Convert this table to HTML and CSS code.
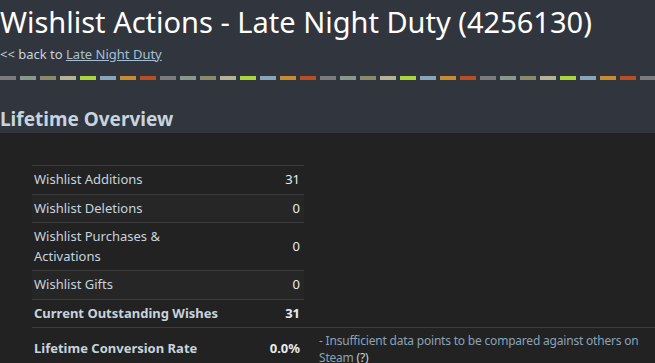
FILE: index.html
```html
<!DOCTYPE html>
<html>
<head>
<meta charset="utf-8">
<link rel="stylesheet" href="styles.css">
</head>
<body>
<header class="page-head">
  <h1 class="title">Wishlist Actions - Late Night Duty (4256130)</h1>
  <div class="back">&lt;&lt; back to <a class="back-link" href="#">Late Night Duty</a></div>
  <div class="dashes"></div>
  <h2 class="section-title">Lifetime Overview</h2>
</header>
<main class="panel">
  <table class="stats">
    <tr><td class="label">Wishlist Additions</td><td class="num">31</td></tr>
    <tr><td class="label">Wishlist Deletions</td><td class="num">0</td></tr>
    <tr><td class="label">Wishlist Purchases &amp;<br>Activations</td><td class="num">0</td></tr>
    <tr><td class="label">Wishlist Gifts</td><td class="num">0</td></tr>
    <tr class="strong"><td class="label">Current Outstanding Wishes</td><td class="num">31</td></tr>
  </table>
  <table class="stats stats-wide">
    <tr class="strong"><td class="label">Lifetime Conversion Rate</td><td class="num">0.0%</td><td class="note">- Insufficient data points to be compared against others on Steam <span class="help">(?)</span></td></tr>
  </table>
</main>
</body>
</html>
```
FILE: styles.css
```css
html, body {
  margin: 0;
  padding: 0;
  background: #222222;
  font-family: "Noto Sans", "DejaVu Sans", sans-serif;
  color: #c6d4df;
}
.page-head {
  background: #31353d;
  padding: 2px 0 1px;
}
.title {
  margin: 0;
  font-size: 29px;
  font-weight: 400;
  line-height: 39px;
  color: #ffffff;
}
.back {
  font-size: 13px;
  line-height: 18px;
  margin-top: 4px;
  color: #c6d4df;
}
.back-link {
  color: #a6c0d3;
  text-decoration: underline;
}
.dashes {
  margin-top: 13px;
  height: 4px;
  background-image: linear-gradient(to right,
    #7a7b7c 0 16px, transparent 16px 20px,
    #8a978e 20px 36px, transparent 36px 40px,
    #8c8a6c 40px 56px, transparent 56px 60px,
    #b5b396 60px 76px, transparent 76px 80px,
    #acd43c 80px 96px, transparent 96px 100px,
    #84a8b9 100px 116px, transparent 116px 120px,
    #c98b32 120px 136px, transparent 136px 140px,
    #b64f26 140px 156px, transparent 156px 160px);
  background-size: 160px 4px;
  background-repeat: repeat-x;
}
.section-title {
  margin: 26px 0 0;
  font-size: 19px;
  font-weight: 700;
  line-height: 26px;
  color: #c6d4df;
}
.panel {
  padding: 32px 0 0 32px;
}
.stats {
  border-collapse: collapse;
  width: 272px;
  font-size: 13px;
  line-height: 19.5px;
}
.stats td {
  border-top: 1px solid #3c3c3c;
  padding: 4px 4px 4px 2px;
  vertical-align: middle;
}
.stats tr:nth-child(even) td {
  background: #262626;
}
.stats .num {
  text-align: right;
  color: #e6ebef;
}
.strong td {
  font-weight: 700;
}
.stats-wide {
  width: 623px;
  table-layout: fixed;
}
.stats-wide tr td {
  background: transparent;
}
.stats-wide .label {
  width: 206px;
}
.stats-wide .num {
  width: 54px;
}
.stats-wide .note {
  font-weight: 400;
  font-size: 12px;
  letter-spacing: -0.2px;
  line-height: 17px;
  color: #8ba3b7;
  padding-left: 15px;
}
.help {
  color: #c6d4df;
}
```
